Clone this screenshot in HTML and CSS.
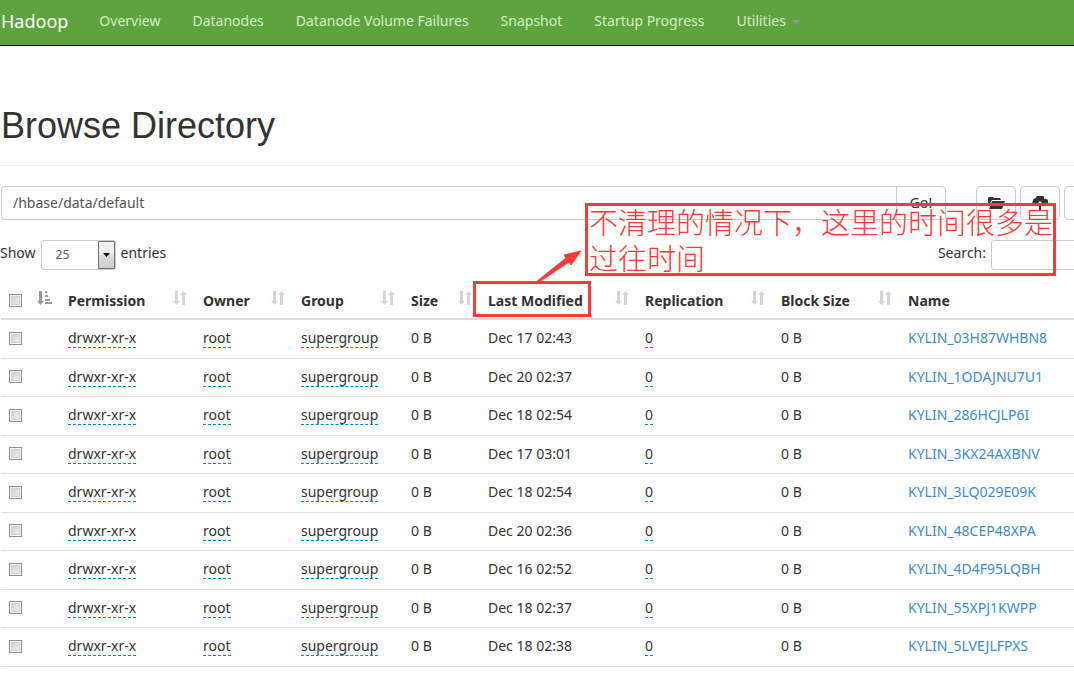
FILE: index.html
```html
<!DOCTYPE html>
<html lang="en">
<head>
<meta charset="utf-8">
<title>Browsing HDFS</title>
<link rel="stylesheet" href="styles.css">
</head>
<body>
<svg class="sprite" aria-hidden="true">
  <symbol id="sort" viewBox="0 0 14 14"><path d="M2 0h3v10h2l-3.500 4L0 10h2zM9 14V4H7l3.500-4L14 4h-2v10z"/></symbol>
  <symbol id="sort-asc" viewBox="0 0 15 14"><path d="M2 0h3v10h2l-3.500 4L0 10h2zM8 0h2v2H8zM8 4h3v2H8zM8 8h5v2H8zM8 11h7v2H8z"/></symbol>
</svg>
<header class="navbar">
  <a class="brand" href="#">Hadoop</a>
  <nav class="nav">
    <a href="#">Overview</a>
    <a href="#">Datanodes</a>
    <a href="#">Datanode Volume Failures</a>
    <a href="#">Snapshot</a>
    <a href="#">Startup Progress</a>
    <a href="#">Utilities <span class="caret"></span></a>
  </nav>
</header>
<main class="page">
  <h1>Browse Directory</h1>
  <div class="toolbar">
    <form class="path">
      <input type="text" value="/hbase/data/default" aria-label="Directory path">
      <button type="button">Go!</button>
    </form>
    <div class="actions">
      <button type="button" aria-label="Create directory"><svg width="18" height="14" viewBox="0 0 18 14"><path d="M1 10V2l1-1h4l1 1h6l1 2H5z"/><path d="M5 5h13l-3 8H2z"/></svg></button>
      <button type="button" aria-label="Upload files"><svg width="16" height="14" viewBox="0 0 16 14"><path d="M6 10H3a3 3 0 0 1-2-5 3 3 0 0 1 3-3 4 4 0 0 1 8 1 3 3 0 0 1 2 7h-4V9h2L8 5 4 9h2zM7 8h2v6H7z"/></svg></button>
      <button type="button" aria-label="Cut"></button>
    </div>
  </div>
  <div class="controls">
    <label class="length">Show
      <span class="picker"><select><option>10</option><option selected>25</option><option>50</option></select><svg class="drop" width="17" height="28" viewBox="0 0 17 28" aria-hidden="true"><defs><linearGradient id="g" x2="0" y2="1"><stop stop-color="#f4f4f4"/><stop offset=".5" stop-color="#ebebeb"/><stop offset=".5" stop-color="#dddddd"/><stop offset="1" stop-color="#cfcfcf"/></linearGradient></defs><path d="M.5.5h16v27H.5z" fill="url(#g)" stroke="#707070"/><path d="M5 12h7l-3.500 4z"/></svg></span>
      entries</label>
    <label class="search">Search: <input type="search"></label>
  </div>
  <table>
    <colgroup><col class="c-check"><col class="c-perm"><col class="c-owner"><col class="c-group"><col class="c-size"><col class="c-date"><col class="c-repl"><col class="c-block"><col></colgroup>
    <thead>
      <tr>
        <th><div class="head"><input type="checkbox" aria-label="Select all"><svg class="asc"><use href="#sort-asc"/></svg></div></th>
        <th><div class="head">Permission<svg><use href="#sort"/></svg></div></th>
        <th><div class="head">Owner<svg><use href="#sort"/></svg></div></th>
        <th><div class="head">Group<svg><use href="#sort"/></svg></div></th>
        <th><div class="head">Size<svg><use href="#sort"/></svg></div></th>
        <th><div class="head">Last Modified<svg><use href="#sort"/></svg></div></th>
        <th><div class="head">Replication<svg><use href="#sort"/></svg></div></th>
        <th><div class="head">Block Size<svg><use href="#sort"/></svg></div></th>
        <th><div class="head">Name</div></th>
      </tr>
    </thead>
    <tbody>
      <tr><td><input type="checkbox" aria-label="Select KYLIN_03H87WHBN8"></td><td><span class="edit">drwxr-xr-x</span></td><td><span class="edit">root</span></td><td><span class="edit">supergroup</span></td><td>0 B</td><td>Dec 17 02:43</td><td><span class="edit">0</span></td><td>0 B</td><td><a href="#">KYLIN_03H87WHBN8</a></td></tr>
      <tr><td><input type="checkbox" aria-label="Select KYLIN_1ODAJNU7U1"></td><td><span class="edit">drwxr-xr-x</span></td><td><span class="edit">root</span></td><td><span class="edit">supergroup</span></td><td>0 B</td><td>Dec 20 02:37</td><td><span class="edit">0</span></td><td>0 B</td><td><a href="#">KYLIN_1ODAJNU7U1</a></td></tr>
      <tr><td><input type="checkbox" aria-label="Select KYLIN_286HCJLP6I"></td><td><span class="edit">drwxr-xr-x</span></td><td><span class="edit">root</span></td><td><span class="edit">supergroup</span></td><td>0 B</td><td>Dec 18 02:54</td><td><span class="edit">0</span></td><td>0 B</td><td><a href="#">KYLIN_286HCJLP6I</a></td></tr>
      <tr><td><input type="checkbox" aria-label="Select KYLIN_3KX24AXBNV"></td><td><span class="edit">drwxr-xr-x</span></td><td><span class="edit">root</span></td><td><span class="edit">supergroup</span></td><td>0 B</td><td>Dec 17 03:01</td><td><span class="edit">0</span></td><td>0 B</td><td><a href="#">KYLIN_3KX24AXBNV</a></td></tr>
      <tr><td><input type="checkbox" aria-label="Select KYLIN_3LQ029E09K"></td><td><span class="edit">drwxr-xr-x</span></td><td><span class="edit">root</span></td><td><span class="edit">supergroup</span></td><td>0 B</td><td>Dec 18 02:54</td><td><span class="edit">0</span></td><td>0 B</td><td><a href="#">KYLIN_3LQ029E09K</a></td></tr>
      <tr><td><input type="checkbox" aria-label="Select KYLIN_48CEP48XPA"></td><td><span class="edit">drwxr-xr-x</span></td><td><span class="edit">root</span></td><td><span class="edit">supergroup</span></td><td>0 B</td><td>Dec 20 02:36</td><td><span class="edit">0</span></td><td>0 B</td><td><a href="#">KYLIN_48CEP48XPA</a></td></tr>
      <tr><td><input type="checkbox" aria-label="Select KYLIN_4D4F95LQBH"></td><td><span class="edit">drwxr-xr-x</span></td><td><span class="edit">root</span></td><td><span class="edit">supergroup</span></td><td>0 B</td><td>Dec 16 02:52</td><td><span class="edit">0</span></td><td>0 B</td><td><a href="#">KYLIN_4D4F95LQBH</a></td></tr>
      <tr><td><input type="checkbox" aria-label="Select KYLIN_55XPJ1KWPP"></td><td><span class="edit">drwxr-xr-x</span></td><td><span class="edit">root</span></td><td><span class="edit">supergroup</span></td><td>0 B</td><td>Dec 18 02:37</td><td><span class="edit">0</span></td><td>0 B</td><td><a href="#">KYLIN_55XPJ1KWPP</a></td></tr>
      <tr><td><input type="checkbox" aria-label="Select KYLIN_5LVEJLFPXS"></td><td><span class="edit">drwxr-xr-x</span></td><td><span class="edit">root</span></td><td><span class="edit">supergroup</span></td><td>0 B</td><td>Dec 18 02:38</td><td><span class="edit">0</span></td><td>0 B</td><td><a href="#">KYLIN_5LVEJLFPXS</a></td></tr>
    </tbody>
  </table>
</main>
<div class="mark mark-column"></div>
<div class="mark mark-note"></div>
<svg class="arrow" width="52" height="38" viewBox="0 0 52 38" aria-hidden="true"><path d="M5 34 38 12 40 15 50 1 33 5 35 8 5 32z"/></svg>
<p class="note" lang="zh-CN">不清理的情况下，这里的时间很多是<br>过往时间</p>
</body>
</html>
```
FILE: styles.css
```css
* { box-sizing: border-box; }
body {
  margin: 0;
  position: relative;
  overflow-x: hidden;
  background: #fff;
  color: #333;
  font: 14px/20px "Noto Sans", "Open Sans", sans-serif;
}
button, input, select { font: inherit; color: inherit; }
a { color: #428bca; text-decoration: none; }
.sprite { display: none; }

.navbar {
  display: flex;
  align-items: center;
  height: 46px;
  padding-bottom: 4px;
  background: #5fa33e;
  border-bottom: 1px solid #080808;
}
.brand { padding: 0 16px 0 1px; color: #fff; font-size: 18px; }
.nav { display: flex; gap: 2px; white-space: nowrap; }
.nav a { padding: 0 15px; color: #d2efc4; }
.caret {
  display: inline-block;
  margin-left: 2px;
  vertical-align: middle;
  border: 4px solid transparent;
  border-top-color: #999;
  border-bottom: 0;
}

.page { padding-left: 1px; }
h1 {
  margin: 60px 0 20px;
  padding-bottom: 19px;
  border-bottom: 1px solid #eee;
  font: 500 36px/40px "Liberation Sans", Arial, sans-serif;
}
.toolbar { display: flex; gap: 30px; margin-right: -30px; }
.path { display: flex; flex: 1; }
.path input {
  flex: 1;
  min-width: 0;
  height: 34px;
  padding: 5px 11px 7px;
  color: #555;
  border: 1px solid #ccc;
  border-radius: 4px 0 0 4px;
}
button { height: 34px; background: #fff; border: 1px solid #ccc; border-radius: 4px; }
.path button { width: 50px; margin-left: -1px; padding: 0; border-radius: 0 4px 4px 0; }
.actions { display: flex; gap: 4px; }
.actions button { display: flex; align-items: center; justify-content: center; width: 40px; padding: 0; }
.actions svg { fill: #333; }

.controls { display: flex; justify-content: space-between; padding-top: 20px; margin-right: -72px; }
.controls label { display: flex; gap: 5px; line-height: 26px; }
.length { margin-left: -1px; }
.picker { position: relative; height: 30px; }
select {
  appearance: none;
  display: block;
  width: 75px;
  height: 30px;
  padding: 0 14px;
  background: #fff;
  border: 1px solid #ccc;
  border-radius: 3px;
  color: #555;
  font-size: 12px;
}
.drop { position: absolute; top: 1px; right: 1px; pointer-events: none; }
.search input { width: 155px; height: 30px; border: 1px solid #ccc; border-radius: 3px; }

table { width: 100%; margin-top: 11px; table-layout: fixed; border-collapse: separate; border-spacing: 0; }
.c-check { width: 59px; }
.c-perm { width: 135px; }
.c-owner { width: 98px; }
.c-group { width: 110px; }
.c-size { width: 77px; }
.c-date { width: 157px; }
.c-repl { width: 136px; }
.c-block { width: 127px; }
th, td { height: 39px; text-align: left; white-space: nowrap; }
th { padding: 2px 8px 0; border-bottom: 2px solid #ddd; }
td { padding: 0 8px 2px; border-bottom: 1px solid #ddd; }
tr:nth-child(even) td { height: 38px; }
.head { display: flex; align-items: center; justify-content: space-between; }
.head svg { width: 14px; height: 14px; margin-bottom: 6px; fill: #d5d5d5; }
.head .asc { width: 15px; fill: #999; }
.edit { border-bottom: 1px dashed #0088cc; }
input[type="checkbox"] {
  appearance: none;
  display: block;
  width: 13px;
  height: 13px;
  margin: 0;
  border: 1px solid #8e8f8f;
  background: linear-gradient(135deg, #c5c9d0, #f6f6f6);
  box-shadow: inset 0 0 0 1px #f4f4f4, inset 0 0 0 2px #cfd0d2;
}

.mark { position: absolute; border: 3px solid #fb3a3a; }
.mark-column { left: 473px; top: 281px; width: 118px; height: 36px; }
.mark-note { left: 585px; top: 203px; width: 471px; height: 73px; }
.arrow { position: absolute; left: 531px; top: 250px; fill: #fb3a3a; stroke: #fb3a3a; }
.note {
  position: absolute;
  left: 589px;
  top: 203px;
  margin: 0;
  color: #fb3a3a;
  font: 300 29px/36px "Noto Sans CJK SC", sans-serif;
  white-space: nowrap;
}
```
